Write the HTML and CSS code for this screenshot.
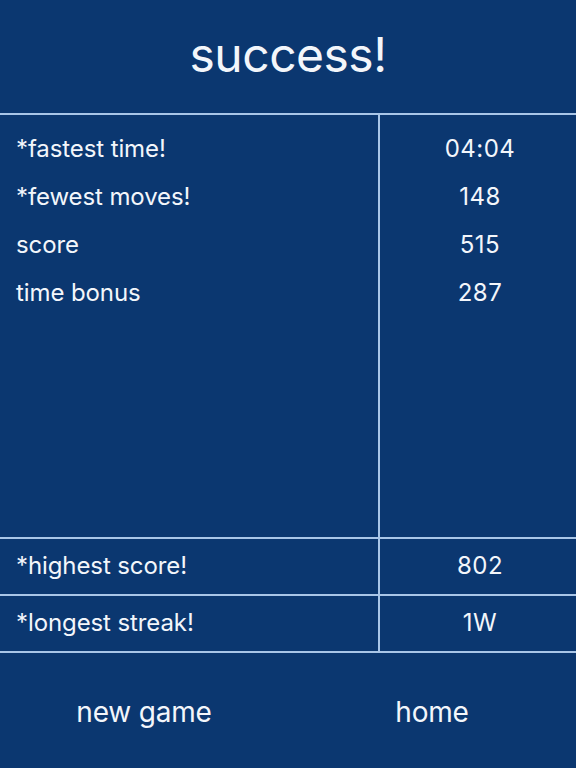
FILE: index.html
```html
<!DOCTYPE html>
<html lang="en">
<head>
<meta charset="utf-8">
<title>success!</title>
<link rel="stylesheet" href="styles.css">
</head>
<body>
<main class="screen">
  <header class="title-bar">
    <h1 class="title">success!</h1>
  </header>
  <section class="stats">
    <div class="stats-col labels">
      <div class="line">*fastest time!</div>
      <div class="line">*fewest moves!</div>
      <div class="line">score</div>
      <div class="line">time bonus</div>
    </div>
    <div class="stats-col values">
      <div class="line">04:04</div>
      <div class="line">148</div>
      <div class="line">515</div>
      <div class="line">287</div>
    </div>
  </section>
  <section class="record">
    <div class="record-label">*highest score!</div>
    <div class="record-value">802</div>
  </section>
  <section class="record last">
    <div class="record-label">*longest streak!</div>
    <div class="record-value">1W</div>
  </section>
  <nav class="actions">
    <button class="action">new game</button>
    <button class="action">home</button>
  </nav>
</main>
</body>
</html>
```

FILE: styles.css
```css
* { box-sizing: border-box; }
html, body {
  margin: 0;
  padding: 0;
  background: #0b3770;
}
body {
  width: 576px;
  height: 768px;
  font-family: Inter, Roboto, "Liberation Sans", sans-serif;
  color: #f3f6fb;
}
.screen {
  display: flex;
  flex-direction: column;
  height: 768px;
}
.title-bar {
  height: 115px;
  border-bottom: 2px solid #a9c6e8;
  display: flex;
  align-items: center;
  justify-content: center;
  padding-bottom: 4px;
}
.title {
  margin: 0;
  font-weight: 400;
  font-size: 48px;
  line-height: 1;
  letter-spacing: -0.5px;
}
.stats {
  display: grid;
  grid-template-columns: 380px 1fr;
  height: 422px;
}
.stats-col {
  padding-top: 10px;
}
.labels {
  border-right: 2px solid #a9c6e8;
  padding-left: 16px;
}
.values {
  text-align: center;
  padding-left: 4px;
}
.line {
  height: 48px;
  line-height: 48px;
  font-size: 24px;
  letter-spacing: -0.1px;
}
.values .line {
  letter-spacing: 0.5px;
}
.record {
  display: grid;
  grid-template-columns: 380px 1fr;
  height: 57px;
  border-top: 2px solid #a9c6e8;
  font-size: 24px;
  letter-spacing: -0.1px;
}
.record.last {
  height: 59px;
  border-bottom: 2px solid #a9c6e8;
}
.record-label {
  border-right: 2px solid #a9c6e8;
  padding-left: 16px;
  padding-bottom: 2px;
  display: flex;
  align-items: center;
}
.record-value {
  display: flex;
  align-items: center;
  justify-content: center;
  padding-left: 4px;
  padding-bottom: 2px;
  letter-spacing: 0.5px;
}
.actions {
  flex: 1;
  display: grid;
  grid-template-columns: 1fr 1fr;
  align-items: center;
  padding-top: 2px;
}
.action {
  background: none;
  border: 0;
  padding: 0;
  color: #f3f6fb;
  font-family: Inter, Roboto, "Liberation Sans", sans-serif;
  font-size: 28px;
  letter-spacing: -0.2px;
  justify-self: center;
}
```
